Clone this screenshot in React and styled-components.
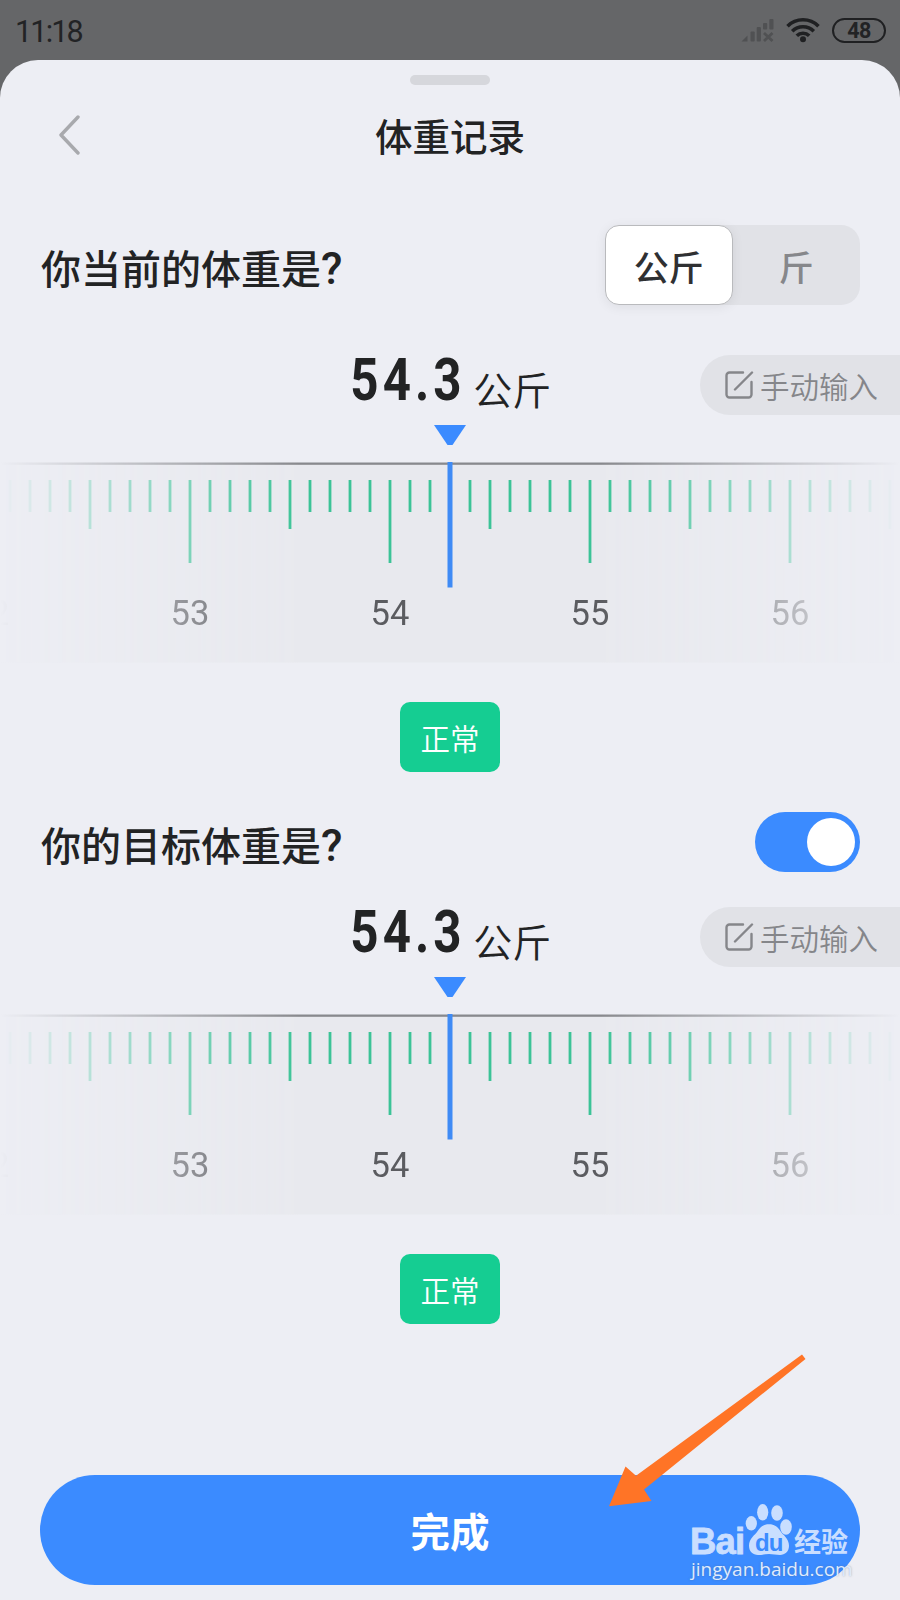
import React from "react";
import styled, { createGlobalStyle } from "styled-components";

const GlobalStyle = createGlobalStyle`
  * {
    box-sizing: border-box;
  }
  body {
    margin: 0;
    background: #656668;
    font-family: "Noto Sans CJK SC", sans-serif;
    color: #222324;
  }
  button {
    border: none;
    padding: 0;
    background: none;
    font-family: inherit;
    color: inherit;
  }
`;

const TICK_GAP = 20;
const LABELS = [
  { x: -10, text: "52" },
  { x: 190, text: "53" },
  { x: 390, text: "54" },
  { x: 590, text: "55" },
  { x: 790, text: "56" },
];

const tickEnd = (x) => {
  if ((x - 190) % 200 === 0) return 101;
  if ((x - 90) % 200 === 0) return 67;
  return 50;
};

const ticks = Array.from({ length: 45 }, (_, i) => 10 + i * TICK_GAP);

const Ruler = () => (
  <RulerStyled viewBox="0 0 900 201">
    <rect x="0" y="1" width="900" height="199.5" fill="#e8e9ee" />
    <rect x="0" y="0.5" width="900" height="2.3" fill="#88898d" />
    {ticks.map((x) => (
      <rect
        key={x}
        x={x - 1.4}
        y="18"
        width="2.8"
        height={tickEnd(x) - 18}
        fill="#3cc397"
      />
    ))}
    {LABELS.map(({ x, text }) => (
      <text key={text} x={x} y="162.5" textAnchor="middle">
        {text}
      </text>
    ))}
    <rect x="447.5" y="0" width="5" height="125.5" fill="#3f8bf5" />
  </RulerStyled>
);

const WeightPicker = ({ value, unit, status, top }) => (
  <PickerStyled $top={top}>
    <div className="picker__value-row">
      <div className="picker__value">
        <span className="picker__number">{value}</span>
        <span className="picker__unit">{unit}</span>
      </div>
      <button className="picker__manual">
        <svg width="29" height="28" viewBox="0 0 29 28">
          <path d="M18 1.5H4.5a3 3 0 0 0-3 3v19a3 3 0 0 0 3 3h19a3 3 0 0 0 3-3V11" />
          <path d="M10 18.5 27 1.5" />
        </svg>
        手动输入
      </button>
    </div>
    <svg className="picker__pointer" width="34" height="20" viewBox="0 0 34 20">
      <path d="M1 0h32L19.5 20h-5z" fill="#3b8bff" />
    </svg>
    <Ruler />
    <Badge>{status}</Badge>
  </PickerStyled>
);

const StatusIcons = () => (
  <StatusIconsStyled>
    <svg width="34" height="26" viewBox="0 0 34 26" fill="#505153">
      <path d="M0.5 24.5l6-6v6z" />
      <rect x="9.5" y="14.5" width="4.2" height="10" rx="1" />
      <rect x="15.7" y="10" width="4.2" height="14.5" rx="1" />
      <rect x="22" y="6" width="4.2" height="6.5" rx="1" />
      <rect x="28.3" y="2" width="4.2" height="10.5" rx="1" />
      <path
        d="M23 16l8.500 8M31.500 16l-8.500 8"
        stroke="#505153"
        strokeWidth="2.8"
      />
    </svg>
    <svg
      className="status__wifi"
      width="34"
      height="26"
      viewBox="0 0 34 26"
      fill="none"
      stroke="#1f2022"
      strokeWidth="3.6"
    >
      <path d="M1.5 9.2a22 22 0 0 1 31 0" />
      <path d="M6.2 14.2a15.3 15.3 0 0 1 21.6 0" />
      <path d="M10.8 18.8a8.8 8.8 0 0 1 12.4 0" />
      <circle cx="17" cy="22.3" r="3" fill="#1f2022" stroke="none" />
    </svg>
    <div className="status__battery">48</div>
  </StatusIconsStyled>
);

const Watermark = () => (
  <WatermarkStyled>
    <div className="watermark__logo">
      <span className="watermark__bai">Bai</span>
      <span className="watermark__paw">
        <svg width="48" height="54" viewBox="0 0 48 54" fill="#c9deff">
          <ellipse cx="6.3" cy="20.3" rx="5.6" ry="7.3" />
          <ellipse cx="17.7" cy="9.3" rx="5.6" ry="8.3" />
          <ellipse cx="32" cy="10" rx="5.8" ry="7.7" />
          <ellipse cx="41" cy="24" rx="5.8" ry="7.7" />
          <path d="M24 21.3c6 0 9 3 11.5 7 2.5 4 8.5 7 8.5 14.500 0 6-4 9.2-9 9.2-4 0-7-1-11-1s-7 1-11 1c-5 0-9-3.200-9-9.200 0-7.500 6-10.500 8.500-14.500 2.500-4 5.500-7 11.500-7z" />
        </svg>
        <span className="watermark__du">du</span>
      </span>
      <span className="watermark__jingyan">经验</span>
    </div>
    <div className="watermark__url">jingyan.baidu.com</div>
  </WatermarkStyled>
);

const App = () => {
  return (
    <PageStyled>
      <GlobalStyle />
      <StatusBar>
        <span>11:18</span>
        <StatusIcons />
      </StatusBar>
      <Sheet>
        <Handle />
        <Header>
          <svg width="22" height="40" viewBox="0 0 22 40">
            <path d="M20 2 3 20l17 18" />
          </svg>
          <h1>体重记录</h1>
        </Header>
        <Question $height={80} $top={68}>
          <h2>
            你当前的体重是<span>?</span>
          </h2>
          <UnitSwitch>
            <UnitOption $active>公斤</UnitOption>
            <UnitOption>斤</UnitOption>
          </UnitSwitch>
        </Question>
        <WeightPicker top={50} value="54.3" unit="公斤" status="正常" />
        <Question $height={60} $top={40}>
          <h2>
            你的目标体重是<span>?</span>
          </h2>
          <Toggle>
            <span />
          </Toggle>
        </Question>
        <WeightPicker top={35} value="54.3" unit="公斤" status="正常" />
        <DoneButton>完成</DoneButton>
      </Sheet>
      <Arrow width="200" height="155" viewBox="0 0 200 155">
        <path d="M197 2.5 31 123.7 20.5 114.5 4 154.3 46.5 149 39 137.5 200.5 7z" />
      </Arrow>
      <Watermark />
    </PageStyled>
  );
};

export default App;

const PageStyled = styled.div`
  position: relative;
  display: flex;
  flex-direction: column;
  width: 900px;
  height: 1600px;
  overflow: hidden;
  background: #656668;
`;

const StatusBar = styled.div`
  display: flex;
  justify-content: space-between;
  align-items: center;
  height: 60px;
  padding: 0 14px 0 15px;
  font-family: Roboto, sans-serif;
  font-size: 30.5px;
  letter-spacing: -1.8px;
  color: #222325;
  span {
    padding-top: 2px;
  }
`;

const StatusIconsStyled = styled.div`
  display: flex;
  align-items: center;
  .status__wifi {
    margin: 0 12px 0 11px;
  }
  .status__battery {
    width: 54px;
    height: 25px;
    border: 2.5px solid #1f2022;
    border-radius: 12.5px;
    font-size: 21.5px;
    font-weight: 700;
    line-height: 21px;
    letter-spacing: -0.5px;
    text-align: center;
  }
`;

const Sheet = styled.div`
  flex: 1;
  display: flex;
  flex-direction: column;
  align-items: center;
  background: #edeef4;
  border-radius: 38px 38px 0 0;
`;

const Handle = styled.div`
  width: 80px;
  height: 10px;
  margin-top: 15px;
  border-radius: 5px;
  background: #d6d7dc;
`;

const Header = styled.div`
  display: flex;
  align-items: flex-start;
  width: 100%;
  height: 72px;
  padding: 28px 58px 0;
  svg {
    margin-top: 2px;
    fill: none;
    stroke: #a8a9ad;
    stroke-width: 3.4;
    stroke-linecap: round;
    stroke-linejoin: round;
  }
  h1 {
    flex: 1;
    margin: 0 22px 0 0;
    font-size: 37.5px;
    font-weight: 500;
    line-height: 44px;
    text-align: center;
  }
`;

const Question = styled.div`
  display: flex;
  justify-content: space-between;
  align-items: center;
  width: 820px;
  height: ${({ $height }) => $height}px;
  margin-top: ${({ $top }) => $top}px;
  h2 {
    margin: 0;
    padding: 3px 0 0 1px;
    font-size: 40px;
    font-weight: 500;
    line-height: 60px;
  }
  h2 span {
    font-family: Roboto, sans-serif;
    font-size: 44px;
    line-height: 40px;
  }
`;

const UnitSwitch = styled.div`
  display: flex;
  width: 255px;
  height: 80px;
  border-radius: 19px;
  background: #e1e2e7;
`;

const UnitOption = styled.button`
  width: 127.5px;
  height: 80px;
  border-radius: 14px;
  font-size: 35px;
  font-weight: 500;
  line-height: 78px;
  padding-top: 1px;
  color: ${({ $active }) => ($active ? "#2f3032" : "#86878b")};
  background: ${({ $active }) => ($active ? "#ffffff" : "transparent")};
  border: 1px solid ${({ $active }) => ($active ? "#b9babd" : "transparent")};
  box-shadow: ${({ $active }) =>
    $active ? "0 2px 12px rgba(0, 0, 0, 0.07)" : "none"};
`;

const PickerStyled = styled.div`
  display: flex;
  flex-direction: column;
  align-items: center;
  width: 900px;
  .picker__value-row {
    display: grid;
    grid-template-columns: 200px 500px 200px;
    width: 100%;
    height: 70px;
    margin-top: ${({ $top }) => $top}px;
  }
  .picker__value {
    grid-column: 2;
    display: flex;
    justify-content: center;
    align-items: baseline;
    padding-right: 25px;
    line-height: 60px;
  }
  .picker__number {
    font-family: Roboto, sans-serif;
    font-size: 60px;
    font-weight: 700;
    letter-spacing: 5px;
    transform: translate(1px, -5.5px) scaleX(0.82);
    transform-origin: 100% 50%;
  }
  .picker__unit {
    margin-left: 9px;
    font-size: 39px;
    font-weight: 350;
  }
  .picker__manual {
    display: flex;
    align-items: center;
    height: 60px;
    padding-left: 25px;
    border-radius: 30px 0 0 30px;
    background: #e1e2e7;
    font-size: 29.5px;
    font-weight: 350;
    color: #85868a;
    white-space: nowrap;
  }
  .picker__manual svg {
    margin-right: 6px;
    fill: none;
    stroke: #85868a;
    stroke-width: 2.4;
    stroke-linecap: round;
  }
  .picker__pointer {
    display: block;
  }
`;

const RulerStyled = styled.svg`
  display: block;
  width: 900px;
  height: 201px;
  margin: 17px 0 39px;
  mask-image: linear-gradient(
    to right,
    transparent 0,
    #000 300px,
    #000 600px,
    transparent 900px
  );
  text {
    font-family: Roboto, sans-serif;
    font-size: 34.5px;
    fill: #5b5c60;
  }
`;

const Badge = styled.div`
  width: 100px;
  height: 70px;
  border-radius: 10px;
  background: #15cd92;
  font-size: 29.5px;
  font-weight: 350;
  line-height: 71px;
  text-align: center;
  color: #ffffff;
`;

const Toggle = styled.button`
  display: flex;
  justify-content: flex-end;
  align-items: center;
  width: 105px;
  height: 60px;
  padding-right: 5px;
  border-radius: 30px;
  background: #3b8bff;
  span {
    width: 48px;
    height: 48px;
    border-radius: 50%;
    background: #ffffff;
  }
`;

const DoneButton = styled.button`
  width: 820px;
  height: 110px;
  margin-top: auto;
  margin-bottom: 15px;
  border-radius: 55px;
  background: #3b8bff;
  font-size: 39.5px;
  font-weight: 700;
  line-height: 110px;
  color: #ffffff;
`;

const Arrow = styled.svg`
  position: absolute;
  left: 605px;
  top: 1352px;
  overflow: visible;
  fill: #ff7426;
`;

const WatermarkStyled = styled.div`
  position: absolute;
  left: 690px;
  top: 1503px;
  width: 164px;
  color: #c9deff;
  .watermark__logo {
    display: flex;
    align-items: flex-end;
    height: 54px;
  }
  .watermark__bai {
    width: 55px;
    font-family: "Liberation Sans", sans-serif;
    font-size: 36.5px;
    font-weight: 700;
    line-height: 31px;
    letter-spacing: -0.8px;
    -webkit-text-stroke: 0.8px #c9deff;
  }
  .watermark__paw {
    position: relative;
    width: 48px;
    height: 54px;
  }
  .watermark__paw svg {
    display: block;
  }
  .watermark__du {
    position: absolute;
    left: 10px;
    top: 28px;
    font-family: "Liberation Sans", sans-serif;
    font-size: 24px;
    font-weight: 700;
    line-height: 24px;
    letter-spacing: -1px;
    color: #3b8bff;
  }
  .watermark__jingyan {
    padding-left: 1px;
    font-size: 27px;
    font-weight: 700;
    line-height: 32px;
    white-space: nowrap;
  }
  .watermark__url {
    padding-left: 1px;
    font-family: "Open Sans", sans-serif;
    font-size: 19px;
    line-height: 24px;
    color: #dfebff;
    text-shadow: 0 0 2px rgba(90, 100, 120, 0.5);
  }
`;
